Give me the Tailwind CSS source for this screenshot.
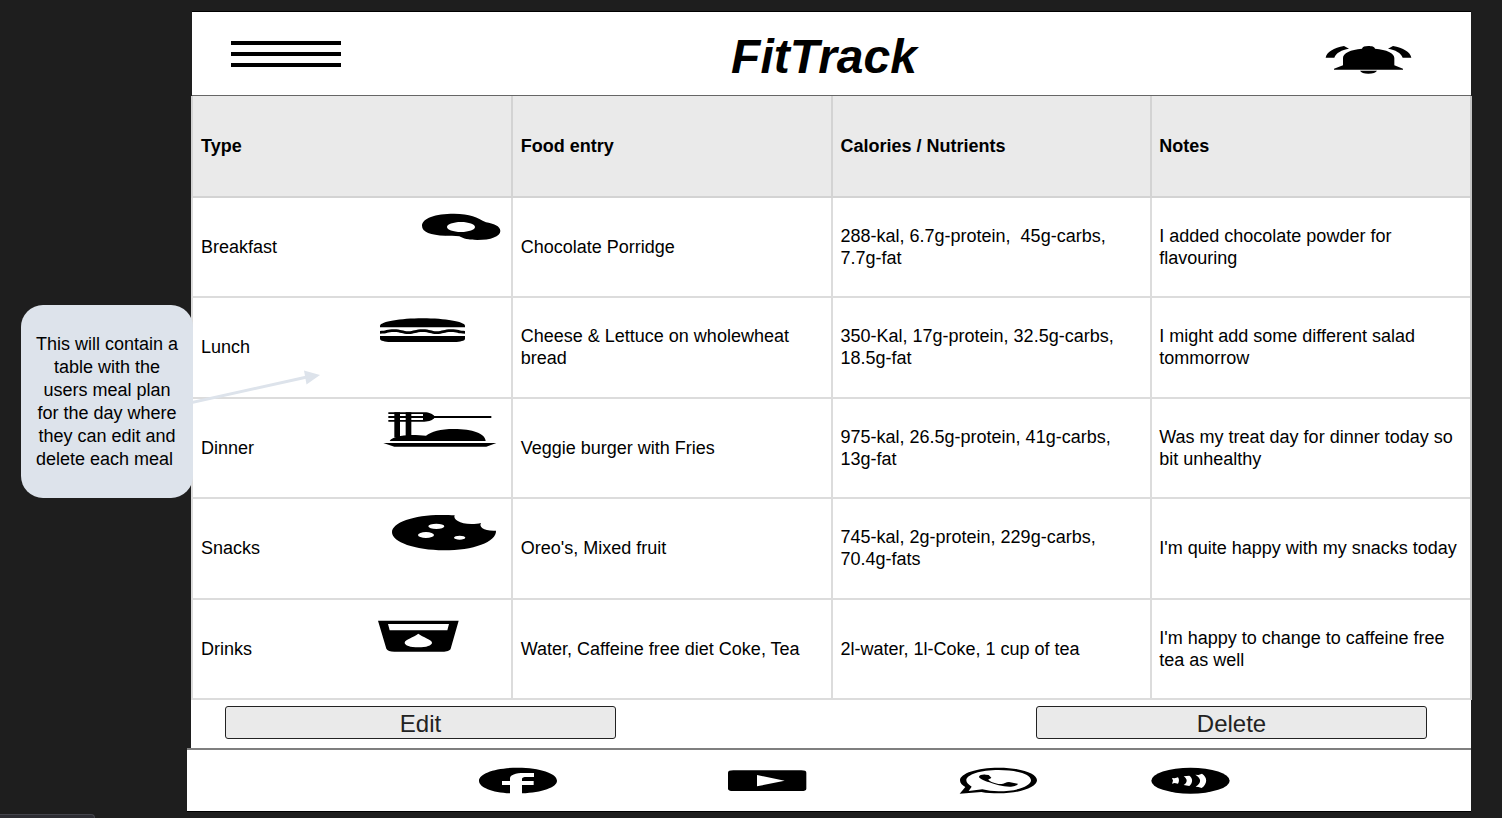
<!DOCTYPE html>
<html lang="en">
<head>
<meta charset="utf-8">
<meta name="viewport" content="width=device-width, initial-scale=1">
<title>FitTrack</title>
<script src="https://cdn.jsdelivr.net/npm/@tailwindcss/browser@4"></script>
</head>
<body class="relative flex min-h-screen overflow-x-hidden bg-[#1e1e1e] pt-[11px] pr-[30px] font-['Liberation_Sans',Arial,sans-serif] text-lg leading-[22px] text-black">

<aside class="relative z-10 w-[191px] shrink-0 pt-[294px] pl-[21px]">
  <div class="relative flex h-[193px] w-[172px] items-center rounded-[22px] bg-[#dde3eb] px-3.5 text-center">
    <p class="leading-[23px]">This will contain a table with the users meal plan for the day where they can edit and delete each meal&nbsp;</p>
    <svg class="absolute top-16 left-full h-10 w-32" viewBox="0 0 128 40" aria-hidden="true">
      <path d="M-1 33.500 L114 8" stroke="#dde3eb" stroke-width="3" fill="none"/>
      <path d="M127 6 L111 1.500 L113.500 15.500Z" fill="#dde3eb"/>
    </svg>
  </div>
</aside>

<main class="min-w-0 flex-1">
  <header class="mr-px ml-px grid h-[85px] grid-cols-[1fr_auto_1fr] items-center border-t border-b border-t-black border-b-[#666] bg-white pr-[54px] pl-[39px]">
    <button type="button" aria-label="Menu" class="flex w-[110px] flex-col gap-[7px]">
      <span class="h-1 w-full bg-black"></span>
      <span class="h-1 w-full bg-black"></span>
      <span class="h-1 w-full bg-black"></span>
    </button>
    <h1 class="pt-1.5 text-5xl font-bold italic">FitTrack</h1>
    <button type="button" aria-label="Notifications" class="mt-3 mr-[5px] justify-self-end">
      <svg class="h-[29px] w-[87px]" viewBox="75 135 261 87" aria-hidden="true">
        <path d="M102 209V206L129 196V174C129 159 151 149 186 146C187 140 195 138 205 138S224 140 225 146C260 149 283 159 283 174V196L309 206V209Z"/>
        <path d="M180 212H231C228 218 218 221 205 221S183 218 180 212Z"/>
        <path d="M77 173C79 157 102 143 132 138L147 146C125 149 108 159 103 173Z"/>
        <path d="M334 173C332 157 309 143 279 138L264 146C286 149 303 159 308 173Z"/>
      </svg>
    </button>
  </header>

  <table class="w-full table-fixed border-separate border-spacing-0 border-r-2 border-[#c4c4c4] bg-white text-left">
    <thead class="bg-[#eaeaea]">
      <tr class="h-[102px]">
        <th scope="col" class="border-b-2 border-l-2 border-[#d3d3d3] px-2 font-bold">Type</th>
        <th scope="col" class="border-b-2 border-l-2 border-[#d3d3d3] px-2 font-bold">Food entry</th>
        <th scope="col" class="border-b-2 border-l-2 border-[#d3d3d3] px-2 font-bold">Calories / Nutrients</th>
        <th scope="col" class="border-b-2 border-l-2 border-[#d3d3d3] px-[7px] font-bold">Notes</th>
      </tr>
    </thead>
    <tbody>
      <tr class="h-[100px]">
        <td class="border-b-2 border-l-2 border-[#dcdcdc] pl-2">
          <div class="flex h-[98px] items-center justify-between">
            Breakfast
            <svg class="mt-[15px] mr-2.5 h-7 w-20 self-start" viewBox="63 69 240 84" aria-hidden="true">
              <path fill-rule="evenodd" d="M66 107C66 85 106 71 162 71C211 71 231 83 258 97C280 101 301 108 301 123C301 140 272 150 232 150C204 150 191 146 178 139C164 137 151 138 135 137C92 135 66 126 66 107ZM141 111C141 119 159 126 183 126S225 119 225 111S207 96 183 96S141 103 141 111Z"/>
            </svg>
          </div>
        </td>
        <td class="border-b-2 border-l-2 border-[#dcdcdc] px-2">Chocolate Porridge</td>
        <td class="border-b-2 border-l-2 border-[#dcdcdc] px-2">288-kal, 6.7g-protein,&nbsp; 45g-carbs, 7.7g-fat</td>
        <td class="border-b-2 border-l-2 border-[#dcdcdc] px-[7px]">I added chocolate powder for flavouring</td>
      </tr>
      <tr class="h-[101px]">
        <td class="border-b-2 border-l-2 border-[#dcdcdc] pb-px pl-2">
          <div class="flex h-[98px] items-center justify-between">
            Lunch
            <svg class="mt-5 mr-[45px] h-6 w-[87px] self-start" viewBox="57 54 261 72" aria-hidden="true">
              <path d="M60 82V77C63 65 120 55 188 55S312 65 315 77V82Z"/>
              <path d="M60 93C76 93 82 88 102 88S130 94 145 94S166 88 188 88S214 94 230 94S252 88 273 88S300 93 315 93V101C292 101 292 96 273 96S248 102 230 102S208 96 188 96S163 102 145 102S122 96 102 96S82 101 60 101Z"/>
              <path d="M60 108H315V117C315 122 300 126 284 126H91C75 126 60 122 60 117Z"/>
            </svg>
          </div>
        </td>
        <td class="border-b-2 border-l-2 border-[#dcdcdc] px-2 pb-px">Cheese &amp; Lettuce on wholewheat bread</td>
        <td class="border-b-2 border-l-2 border-[#dcdcdc] px-2 pb-px">350-Kal, 17g-protein, 32.5g-carbs, 18.5g-fat</td>
        <td class="border-b-2 border-l-2 border-[#dcdcdc] px-[7px] pb-px">I might add some different salad tommorrow</td>
      </tr>
      <tr class="h-[100px]">
        <td class="border-b-2 border-l-2 border-[#dcdcdc] pl-2">
          <div class="flex h-[98px] items-center justify-between">
            Dinner
            <svg class="mt-3 mr-3.5 h-9 w-[114px] self-start" viewBox="39 33 342 108" aria-hidden="true">
              <path d="M55 37H163C178 37 189 43 193 48H364V54H193C189 59 178 65 163 65H55V60H159V54H55V48H159V42H55Z"/>
              <path d="M73 37H90V112H73ZM107 37H124V112H107Z"/>
              <path d="M59 123C66 111 91 106 125 105C142 105 155 106 168 107C184 95 211 87 252 87C307 87 347 101 347 123Z"/>
              <path d="M40 129H379L349 140H73Z"/>
            </svg>
          </div>
        </td>
        <td class="border-b-2 border-l-2 border-[#dcdcdc] px-2">Veggie burger with Fries</td>
        <td class="border-b-2 border-l-2 border-[#dcdcdc] px-2">975-kal, 26.5g-protein, 41g-carbs, 13g-fat</td>
        <td class="border-b-2 border-l-2 border-[#dcdcdc] px-[7px]">Was my treat day for dinner today so bit unhealthy</td>
      </tr>
      <tr class="h-[101px]">
        <td class="border-b-2 border-l-2 border-[#dcdcdc] pb-px pl-2">
          <div class="flex h-[98px] items-center justify-between">
            Snacks
            <svg class="mt-[15px] mr-3.5 h-[37px] w-[106px] self-start" viewBox="63 42 318 111" aria-hidden="true">
              <path fill-rule="evenodd" d="M66 97C66 68 130 45 214 45C230 45 243 45 254 46C248 58 269 72 304 72C316 72 325 71 333 69C326 80 341 94 378 92C380 126 309 151 222 151C135 151 66 126 66 97ZM175 79A24 8 0 1 0 223 79A24 8 0 1 0 175 79ZM144 105A24 9 0 1 0 192 105A24 9 0 1 0 144 105ZM252 113A17 6 0 1 0 286 113A17 6 0 1 0 252 113Z"/>
            </svg>
          </div>
        </td>
        <td class="border-b-2 border-l-2 border-[#dcdcdc] px-2 pb-px">Oreo's, Mixed fruit</td>
        <td class="border-b-2 border-l-2 border-[#dcdcdc] px-2 pb-px">745-kal, 2g-protein, 229g-carbs, 70.4g-fats</td>
        <td class="border-b-2 border-l-2 border-[#dcdcdc] px-[7px] pb-px">I'm quite happy with my snacks today</td>
      </tr>
      <tr class="h-[100px]">
        <td class="border-b-2 border-l-2 border-[#dcdcdc] pl-2">
          <div class="flex h-[98px] items-center justify-between">
            Drinks
            <svg class="mt-5 mr-[51px] h-8 w-[83px] self-start" viewBox="51 60 249 96" aria-hidden="true">
              <path fill-rule="evenodd" d="M54 62H296L272 146C270 152 260 155 248 155H103C90 155 82 152 79 146ZM84 72L89 91H262L267 72ZM175 101C162 112 134 118 134 128C134 136 151 142 175 142S216 136 216 128C216 118 188 112 175 101Z"/>
            </svg>
          </div>
        </td>
        <td class="border-b-2 border-l-2 border-[#dcdcdc] px-2">Water, Caffeine free diet Coke, Tea</td>
        <td class="border-b-2 border-l-2 border-[#dcdcdc] px-2">2l-water, 1l-Coke, 1 cup of tea</td>
        <td class="border-b-2 border-l-2 border-[#dcdcdc] px-[7px]">I'm happy to change to caffeine free tea as well</td>
      </tr>
    </tbody>
  </table>

  <div class="mr-px flex h-12 justify-between bg-white pt-1.5 pr-11 pl-[34px] text-2xl text-[#222]">
    <button type="button" class="h-[33px] w-[391px] rounded-[3px] border border-[#222] bg-[#eaeaea] pt-0.5 leading-7">Edit</button>
    <button type="button" class="h-[33px] w-[391px] rounded-[3px] border border-[#222] bg-[#eaeaea] pt-0.5 leading-7">Delete</button>
  </div>

  <footer class="mr-px -ml-1 flex h-16 items-center border-t-2 border-b border-t-[#7f7f7f] border-b-black bg-white pl-[291px]">
    <a href="#facebook" aria-label="Facebook" class="mr-[169px]">
      <svg class="h-7 w-20" viewBox="54 51 240 84" aria-hidden="true">
        <path d="M150 130C96 127 57 112 57 92C57 70 109 53 174 53S291 70 291 92C291 112 246 127 186 130V105H221V93H186V87C186 83 191 81 200 81H222V69H192C166 69 150 75 150 85V93H126V105H150Z"/>
      </svg>
    </a>
    <a href="#youtube" aria-label="YouTube" class="mr-[151px]">
      <svg class="h-7 w-20" viewBox="801 51 240 84" aria-hidden="true">
        <path fill-rule="evenodd" d="M820 61H1024Q1039 61 1039 68V116Q1039 123 1024 123H820Q804 123 804 116V68Q804 61 820 61ZM891 75V109L974 92Z"/>
      </svg>
    </a>
    <a href="#whatsapp" aria-label="WhatsApp" class="mr-28">
      <svg class="h-7 w-20" viewBox="54 51 240 84" aria-hidden="true">
        <path fill-rule="evenodd" d="M59 131L76 111C66 106 60 99 60 91C60 70 111 53 176 53S291 70 291 91S240 130 176 130C157 130 140 129 124 126ZM86 123L127 118C142 122 158 124 176 124C230 124 273 109 273 91S230 60 176 60S79 74 79 91C79 98 85 104 95 110Z"/>
        <path d="M117 80C118 75 128 73 137 74L146 75L154 83C155 86 144 87 145 89C151 95 165 101 181 102C190 104 197 96 207 96L233 101C236 104 226 109 213 110C192 111 164 104 148 97C131 92 117 85 117 80Z"/>
      </svg>
    </a>
    <a href="#feed" aria-label="Feed">
      <svg class="h-7 w-20" viewBox="630 51 240 84" aria-hidden="true">
        <ellipse cx="751.500" cy="92" rx="117.500" ry="39"/>
        <path fill="#fff" d="M696 84L704 85L714 82C718 87 718 95 714 101L704 99L696 101L699 92ZM731 79L748 77C759 85 759 98 748 108L731 105C743 98 743 87 731 79ZM766 74L775 75L786 71C803 82 803 101 785 114L775 111L767 110C785 99 785 85 766 74Z"/>
      </svg>
    </a>
  </footer>
</main>

<div class="fixed bottom-0 left-0 h-1 w-[95px] rounded-tr-md border-t border-r border-[#44444b] bg-[#2d2d33]"></div>
</body>
</html>
